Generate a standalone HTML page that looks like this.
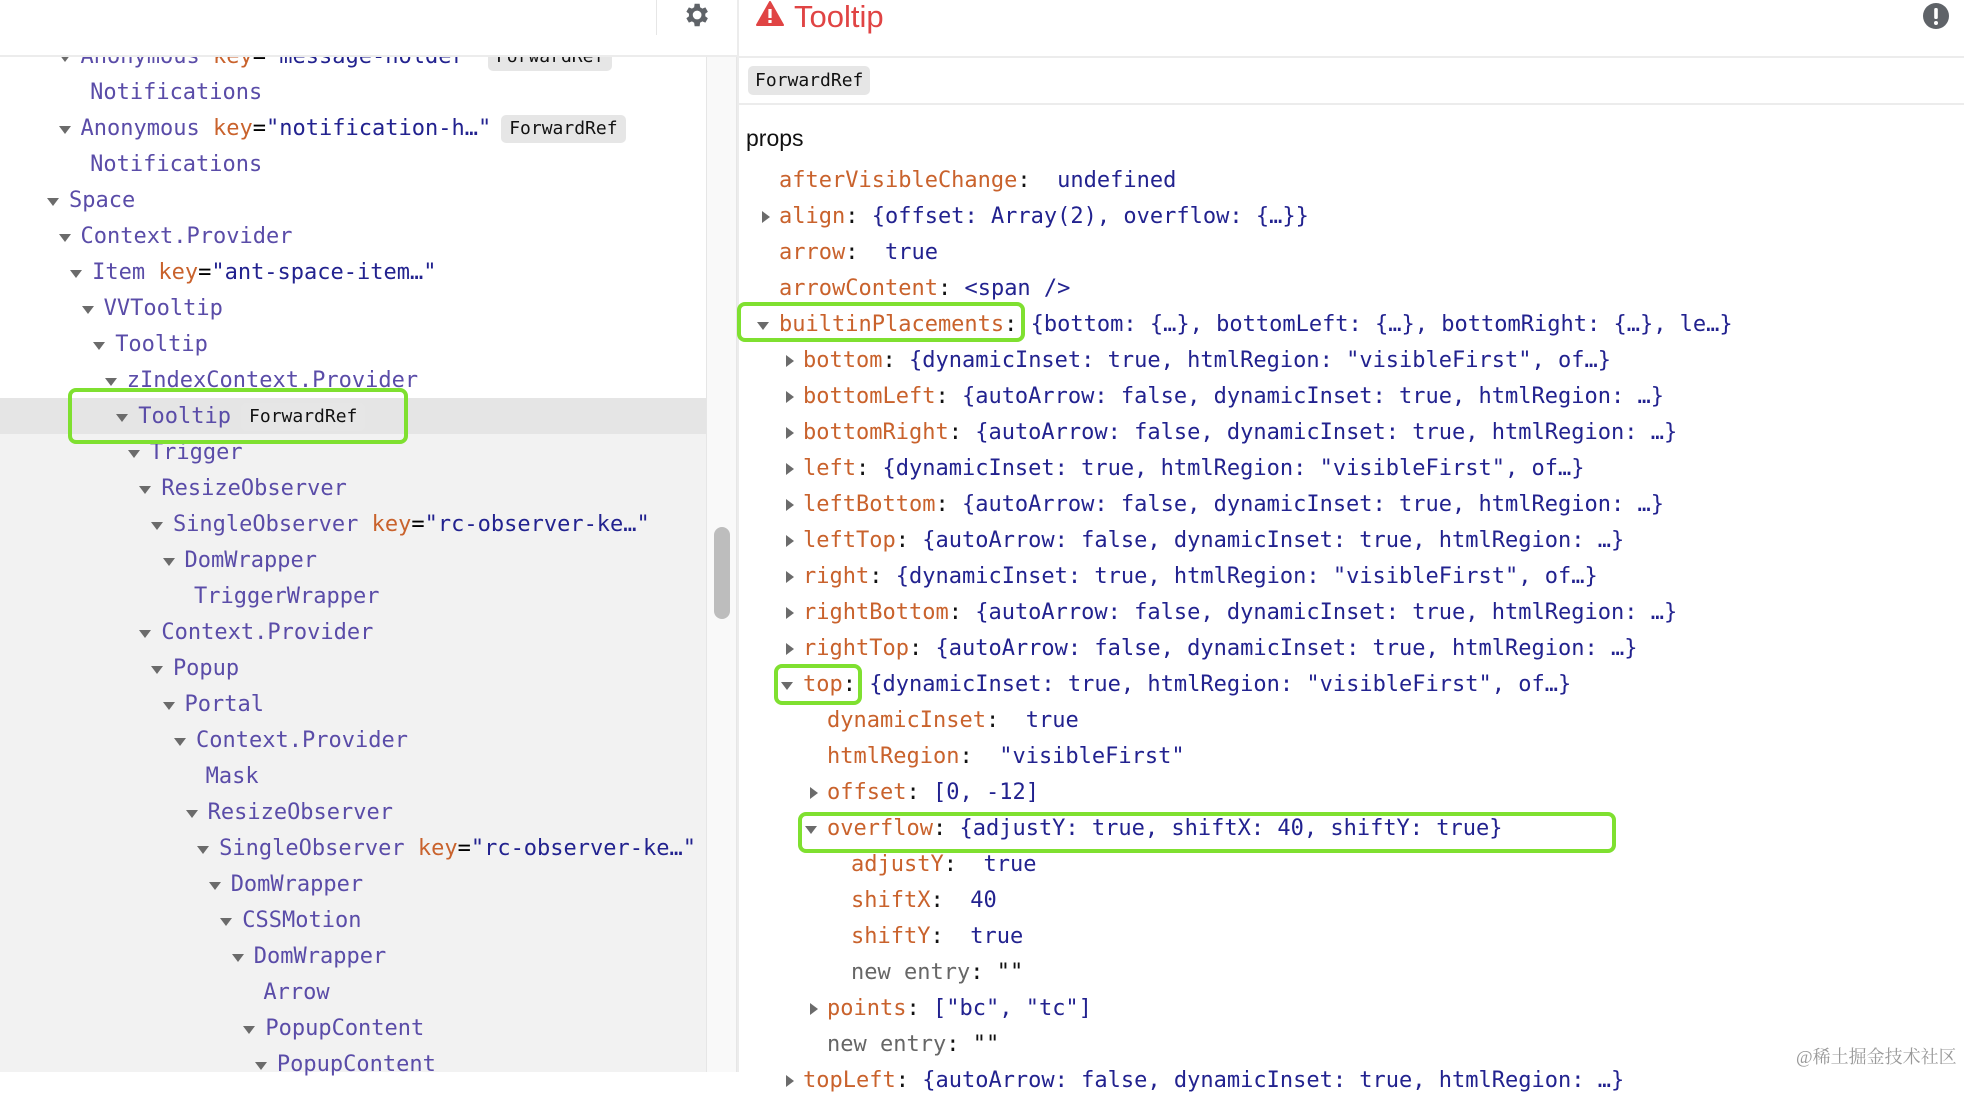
<!DOCTYPE html>
<html><head><meta charset="utf-8"><style>
*{margin:0;padding:0;box-sizing:border-box}
body{width:1964px;height:1072px;overflow:hidden;background:#fff;position:relative;font-family:"DejaVu Sans Mono","Liberation Mono",monospace;font-size:22px}
.r{position:absolute;height:36px;line-height:36px;white-space:pre}
.n{color:#5a4ca8}.k{color:#c9622c}.v{color:#22228f}.kk{color:#c9622c}.g{color:#666}
.a{position:absolute;width:0;height:0}
.ad{border-left:6px solid transparent;border-right:6px solid transparent;border-top:8px solid #6b6b6b;margin-top:15px}
.ar{border-top:6px solid transparent;border-bottom:6px solid transparent;border-left:8px solid #6b6b6b;margin-top:12px}
.b{display:inline-block;background:#e6e6e6;color:#111;font-size:18px;line-height:28px;padding:0 8px;border-radius:5px;margin-left:10px;vertical-align:1px}
.box{position:absolute;border:4px solid #7fe030;border-radius:8px}
</style></head><body>
<div style="position:absolute;left:0;top:434px;width:706px;height:638px;background:#f2f2f2"></div>
<div style="position:absolute;left:0;top:398px;width:706px;height:36px;background:#e5e5e5"></div>
<div style="position:absolute;left:706px;top:57px;width:31px;height:1015px;background:#f9f9f9;border-left:1px solid #e6e6e6;border-right:1px solid #e6e6e6"></div>
<div style="position:absolute;left:714px;top:527px;width:16px;height:92px;background:#bdbdbd;border-radius:8px"></div>
<div id="tree"></div>
<div style="position:absolute;left:0;top:0;width:737px;height:57px;background:#fff;border-bottom:2px solid #ececec"></div>
<div style="position:absolute;left:656px;top:0;width:1px;height:35px;background:#e6e6e6"></div>
<svg style="position:absolute;left:681px;top:0px" width="30" height="30" viewBox="0 0 24 24"><path fill="#5f6368" d="M19.4 13a7.5 7.5 0 0 0 0-2l2.1-1.6-2-3.5-2.5 1a7 7 0 0 0-1.7-1L14.9 3h-4l-.4 2.9a7 7 0 0 0-1.7 1l-2.5-1-2 3.5L6.4 11a7.5 7.5 0 0 0 0 2l-2.1 1.6 2 3.5 2.5-1a7 7 0 0 0 1.7 1l.4 2.9h4l.4-2.9a7 7 0 0 0 1.7-1l2.5 1 2-3.5zM12.9 15.5a3.5 3.5 0 1 1 0-7 3.5 3.5 0 0 1 0 7z"/></svg>
<div style="position:absolute;left:737px;top:0;width:2px;height:1072px;background:#ececec"></div>
<div style="position:absolute;left:739px;top:56px;width:1225px;height:2px;background:#ececec"></div>
<div style="position:absolute;left:739px;top:103px;width:1225px;height:2px;background:#ececec"></div>
<svg style="position:absolute;left:756px;top:1px" width="28" height="26" viewBox="0 0 28 26"><path d="M14 1 L27 24 L1 24 Z" fill="#e04444" stroke="#e04444" stroke-width="2" stroke-linejoin="round"/><rect x="12.4" y="8" width="3.2" height="9" fill="#fff"/><rect x="12.4" y="19" width="3.2" height="3" fill="#fff"/></svg>
<div style="position:absolute;left:794px;top:-3px;font-family:'Liberation Sans',sans-serif;font-size:31px;color:#e04444;line-height:40px">Tooltip</div>
<svg style="position:absolute;left:1922px;top:2px" width="28" height="28" viewBox="0 0 28 28"><circle cx="14" cy="14" r="13" fill="#5f6368"/><rect x="12.2" y="6" width="3.6" height="11" rx="1.5" fill="#fff"/><circle cx="14" cy="21" r="2" fill="#fff"/></svg>
<div style="position:absolute;left:748px;top:66px;height:29px;line-height:29px;background:#e6e6e6;border-radius:5px;padding:0 7px;font-size:18px;color:#111">ForwardRef</div>
<div style="position:absolute;left:746px;top:120px;font-family:'Liberation Sans',sans-serif;font-size:23px;color:#111;line-height:36px">props</div>
<div id="props"></div>
<div class="box" style="left:68px;top:388px;width:340px;height:56px"></div>
<div class="box" style="left:737px;top:302px;width:288px;height:40px"></div>
<div class="box" style="left:774px;top:664px;width:88px;height:41px"></div>
<div class="box" style="left:798px;top:812px;width:818px;height:41px"></div>
<div style="position:absolute;left:1796px;top:1043px;font-family:'Liberation Serif','Noto Serif CJK SC',serif;font-size:18px;color:#999">@稀土掘金技术社区</div>
<script>
var T=[
[55,1,1,'<span class="n">Anonymous</span> <span class="k">key</span>=<span class="v">"message-holder"</span><span class="b">ForwardRef</span>'],
[91,2,0,'<span class="n">Notifications</span>'],
[127,1,1,'<span class="n">Anonymous</span> <span class="k">key</span>=<span class="v">"notification-h…"</span><span class="b">ForwardRef</span>'],
[163,2,0,'<span class="n">Notifications</span>'],
[199,0,1,'<span class="n">Space</span>'],
[235,1,1,'<span class="n">Context.Provider</span>'],
[271,2,1,'<span class="n">Item</span> <span class="k">key</span>=<span class="v">"ant-space-item…"</span>'],
[307,3,1,'<span class="n">VVTooltip</span>'],
[343,4,1,'<span class="n">Tooltip</span>'],
[379,5,1,'<span class="n">zIndexContext.Provider</span>'],
[415,6,1,'<span class="n">Tooltip</span><span class="b">ForwardRef</span>'],
[451,7,1,'<span class="n">Trigger</span>'],
[487,8,1,'<span class="n">ResizeObserver</span>'],
[523,9,1,'<span class="n">SingleObserver</span> <span class="k">key</span>=<span class="v">"rc-observer-ke…"</span>'],
[559,10,1,'<span class="n">DomWrapper</span>'],
[595,11,0,'<span class="n">TriggerWrapper</span>'],
[631,8,1,'<span class="n">Context.Provider</span>'],
[667,9,1,'<span class="n">Popup</span>'],
[703,10,1,'<span class="n">Portal</span>'],
[739,11,1,'<span class="n">Context.Provider</span>'],
[775,12,0,'<span class="n">Mask</span>'],
[811,12,1,'<span class="n">ResizeObserver</span>'],
[847,13,1,'<span class="n">SingleObserver</span> <span class="k">key</span>=<span class="v">"rc-observer-ke…"</span>'],
[883,14,1,'<span class="n">DomWrapper</span>'],
[919,15,1,'<span class="n">CSSMotion</span>'],
[955,16,1,'<span class="n">DomWrapper</span>'],
[991,17,0,'<span class="n">Arrow</span>'],
[1027,17,1,'<span class="n">PopupContent</span>'],
[1063,18,1,'<span class="n">PopupContent</span>']];
var h='';
T.forEach(function(t){var ax=53+11.55*t[1];var top=t[0]-16;
if(t[2])h+='<div class="a ad" style="left:'+(ax-6)+'px;top:'+top+'px"></div>';
h+='<div class="r" style="left:'+(ax+16-(t[2]?0:2))+'px;top:'+top+'px">'+t[3]+'</div>';});
document.getElementById('tree').innerHTML=h;
function K(k,v){return '<span class="kk">'+k+'</span><span style="color:#111">:</span> <span class="v">'+v+'</span>';}
function L(k,v){return '<span class="kk">'+k+'</span><span style="color:#111">:</span>  <span class="v">'+v+'</span>';}
var P=[
[0,0,L('afterVisibleChange','undefined')],
[0,'r',K('align','{offset: Array(2), overflow: {…}}')],
[0,0,L('arrow','true')],
[0,0,K('arrowContent','&lt;span /&gt;')],
[0,'d',K('builtinPlacements','{bottom: {…}, bottomLeft: {…}, bottomRight: {…}, le…}')],
[1,'r',K('bottom','{dynamicInset: true, htmlRegion: "visibleFirst", of…}')],
[1,'r',K('bottomLeft','{autoArrow: false, dynamicInset: true, htmlRegion: …}')],
[1,'r',K('bottomRight','{autoArrow: false, dynamicInset: true, htmlRegion: …}')],
[1,'r',K('left','{dynamicInset: true, htmlRegion: "visibleFirst", of…}')],
[1,'r',K('leftBottom','{autoArrow: false, dynamicInset: true, htmlRegion: …}')],
[1,'r',K('leftTop','{autoArrow: false, dynamicInset: true, htmlRegion: …}')],
[1,'r',K('right','{dynamicInset: true, htmlRegion: "visibleFirst", of…}')],
[1,'r',K('rightBottom','{autoArrow: false, dynamicInset: true, htmlRegion: …}')],
[1,'r',K('rightTop','{autoArrow: false, dynamicInset: true, htmlRegion: …}')],
[1,'d',K('top','{dynamicInset: true, htmlRegion: "visibleFirst", of…}')],
[2,0,L('dynamicInset','true')],
[2,0,L('htmlRegion','"visibleFirst"')],
[2,'r',K('offset','[0, -12]')],
[2,'d',K('overflow','{adjustY: true, shiftX: 40, shiftY: true}')],
[3,0,L('adjustY','true')],
[3,0,L('shiftX','40')],
[3,0,L('shiftY','true')],
[3,0,'<span class="g">new entry</span><span style="color:#111">:</span> <span style="color:#111">""</span>'],
[2,'r',K('points','["bc", "tc"]')],
[2,0,'<span class="g">new entry</span><span style="color:#111">:</span> <span style="color:#111">""</span>'],
[1,'r',K('topLeft','{autoArrow: false, dynamicInset: true, htmlRegion: …}')]];
h='';
P.forEach(function(p,i){var kx=779+24*p[0];var top=179+36*i-16;
if(p[1]=='d')h+='<div class="a ad" style="left:'+(kx-22)+'px;top:'+top+'px"></div>';
if(p[1]=='r')h+='<div class="a ar" style="left:'+(kx-17)+'px;top:'+top+'px"></div>';
h+='<div class="r" style="left:'+kx+'px;top:'+top+'px">'+p[2]+'</div>';});
document.getElementById('props').innerHTML=h;
</script>
</body></html>
